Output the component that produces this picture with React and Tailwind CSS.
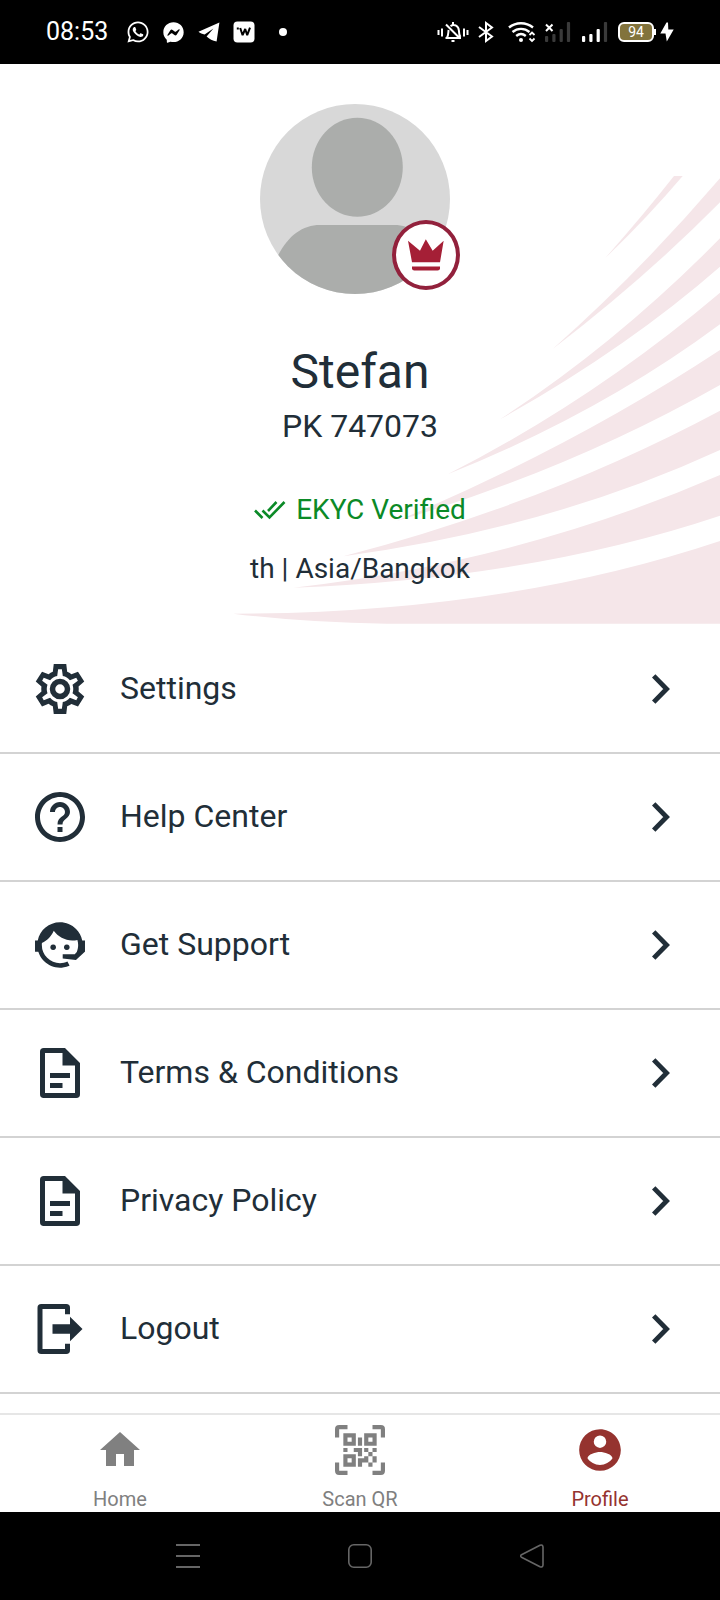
import React from "react";
import { FaWhatsapp, FaFacebookMessenger } from "react-icons/fa";
import { MdHelpOutline } from "react-icons/md";

const PATHS = {
  cog: "M12,7.9A4.1,4.1 0 0,1 16.1,12A4.1,4.1 0 0,1 12,16.1A4.1,4.1 0 0,1 7.9,12A4.1,4.1 0 0,1 12,7.9M12,10.1A1.9,1.9 0 0,0 10.1,12A1.9,1.9 0 0,0 12,13.9A1.9,1.9 0 0,0 13.9,12A1.9,1.9 0 0,0 12,10.1M9.5,22L9.13,18.93C8.5,18.68 7.96,18.34 7.44,17.94L4.8,18.95L2.3,15L4.57,12.97L4.5,12L4.57,11L2.3,9L4.8,5.05L7.44,6.05C7.96,5.66 8.5,5.32 9.13,5.07L9.5,2H14.5L14.87,5.07C15.5,5.32 16.04,5.66 16.56,6.05L19.2,5.05L21.7,9L19.43,11L19.5,12L19.43,13L21.7,15L19.2,18.95L16.56,17.95C16.04,18.34 15.5,18.68 14.87,18.93L14.5,22H9.5M11.25,4.1L10.88,6.8C9.68,7.05 8.8,7.6 8.05,8.5L5.5,7.5L4.85,8.7L7,10.3C6.6,11.4 6.6,12.6 7,13.7L4.85,15.3L5.5,16.5L8.05,15.5C8.8,16.4 9.68,16.95 10.88,17.2L11.25,19.9H12.75L13.12,17.2C14.32,16.95 15.2,16.4 15.95,15.5L18.5,16.5L19.15,15.3L17,13.7C17.4,12.6 17.4,11.4 17,10.3L19.15,8.7L18.5,7.5L15.95,8.5C15.2,7.6 14.32,7.05 13.12,6.8L12.75,4.1H11.25Z",
  agent:
    "M18.72,14.76C19.07,13.91 19.26,13 19.26,12C19.26,11.28 19.15,10.59 18.96,9.95C18.31,10.1 17.63,10.18 16.92,10.18C13.86,10.18 11.15,8.67 9.5,6.34C8.61,8.5 6.91,10.26 4.77,11.22C4.73,11.47 4.73,11.74 4.73,12A7.27,7.27 0 0,0 12,19.27C13.05,19.27 14.06,19.04 14.97,18.63C15.54,19.72 15.8,20.26 15.78,20.26C14.14,20.81 12.87,21.08 12,21.08C9.58,21.08 7.27,20.13 5.57,18.42C4.53,17.38 3.76,16.11 3.33,14.73H2V10.18H3.09C3.93,6.04 7.6,2.92 12,2.92C14.4,2.92 16.71,3.87 18.42,5.58C19.69,6.84 20.54,8.45 20.89,10.18H22V14.73H21.94L18.38,18L13.08,17.4V15.73H17.91L18.72,14.76M9.27,11.77A1.14,1.14 0 1,1 9.26,11.77M14.72,11.77A1.14,1.14 0 1,1 14.71,11.77Z",
  doc: "M5.5 2H14l6 6v12.5a1.5 1.5 0 0 1-1.5 1.5h-13A1.5 1.5 0 0 1 4 20.5v-17A1.5 1.5 0 0 1 5.5 2zM6 4v16h12V9h-5V4zM8 12h8v2H8zM8 16h5v2H8z",
  logout:
    "M4.5 2h10A1.5 1.5 0 0 1 16 3.5V6.1h-2V4H5v16h9v-2.1h2v2.6a1.5 1.5 0 0 1-1.5 1.5h-10A1.5 1.5 0 0 1 3 20.5v-17A1.5 1.5 0 0 1 4.5 2zM9 10.1h7V7.1L21 12l-5 4.9v-3H9z",
  home: "M10,20V14H14V20H19V12H22L12,3L2,12H5V20H10Z",
  account:
    "M12,19.2C9.5,19.2 7.29,17.92 6,16C6.03,14 10,12.9 12,12.9C14,12.9 17.97,14 18,16C16.71,17.92 14.5,19.2 12,19.2M12,5A3,3 0 0,1 15,8A3,3 0 0,1 12,11A3,3 0 0,1 9,8A3,3 0 0,1 12,5M12,2A10,10 0 0,0 2,12A10,10 0 0,0 12,22A10,10 0 0,0 22,12C22,6.47 17.5,2 12,2Z",
};

function Glyph({ name, className }) {
  return (
    <svg viewBox="0 0 24 24" fill="currentColor" fillRule="evenodd" className={className} aria-hidden="true">
      <path d={PATHS[name]} />
    </svg>
  );
}

function Signal({ levels, cross }) {
  return (
    <svg viewBox="0 0 26 22" className="h-[22px] w-[26px]" aria-hidden="true">
      {[0, 1, 2, 3].map((i) => {
        const h = [6, 8, 13, 20][i];
        return (
          <rect key={i} x={i * 7.3} y={21 - h} width="3.2" height={h} rx="1" fill={i < levels ? "#fff" : "#3a3a3a"} />
        );
      })}
      {cross && <path d="M1 3.5l6.5 6.5M7.5 3.5l-6.5 6.5" stroke="#fff" strokeWidth="2" />}
    </svg>
  );
}

function StatusBar() {
  return (
    <div className="flex h-16 items-center justify-between bg-black pr-[46px] pl-[46px] text-white">
      <div className="flex items-center">
        <span className="text-[25px] leading-8">08:53</span>
        <FaWhatsapp className="ml-[18px] size-6" />
        <FaFacebookMessenger className="ml-[13px] size-[21px]" />
        <svg viewBox="0 0 22 20" className="ml-[14px] h-5 w-[22px]" fill="currentColor" aria-hidden="true">
          <path d="M0.5 9.8 21.4 0.6 18.6 19.4C14.5 18.8 11.5 17.4 8.6 14.6L15.4 6.4 6.6 12.6C4.3 12 2.2 11.2 0.5 9.8z" />
        </svg>
        <svg viewBox="0 0 22 22" className="ml-[13px] size-[22px]" aria-hidden="true">
          <rect x="0.5" y="0.5" width="21" height="21" rx="4" fill="#fff" />
          <path d="M3.8 7.6h2M7.2 7l2.4 7.2 2.6-6.2 2 6.2L17 6.6" fill="none" stroke="#000" strokeWidth="2" strokeLinejoin="bevel" />
        </svg>
        <span className="ml-6 size-2 rounded-full bg-white" />
      </div>
      <div className="flex items-center">
        <svg viewBox="0 0 32 22" className="h-[22px] w-8" fill="none" stroke="#fff" strokeWidth="2" aria-hidden="true">
          <path d="M1.5 9v5M5 7.5v8M30.5 9v5M27 7.5v8" />
          <path d="M8.5 17h15.5M10 16.5c1.5-2 1.2-5 1.6-7.5M13.5 5.2c4-2.6 8-.2 8.4 4.3.1 2.5.1 4.5 1.5 6.5M9 3.5l14 14M16 1v3M14.5 20h3" />
        </svg>
        <svg viewBox="0 0 16 22" className="ml-[9px] h-[22px] w-4" fill="none" stroke="#fff" strokeWidth="2" aria-hidden="true">
          <path d="M1 6l13 9.5L8 20V2l6 4.5L1 16" />
        </svg>
        <svg viewBox="0 0 28 22" className="ml-[14px] h-[22px] w-7" fill="none" stroke="#fff" strokeWidth="2.4" aria-hidden="true">
          <path d="M1 6.5C8 .8 18 .8 25 6.5M4.5 11c5-4.2 12-4.2 17 0M8.2 15c3-2.5 6.6-2.5 9.6 0" />
          <circle cx="13" cy="19" r="2" fill="#fff" stroke="none" />
          <path d="M21.5 14l2.5-2.5 2.5 2.5M21.5 17.5l2.5 2.5 2.5-2.5" strokeWidth="1.8" />
        </svg>
        <div className="ml-[9px]"><Signal levels={0} cross /></div>
        <div className="ml-[11px]"><Signal levels={3} /></div>
        <div className="ml-[10px] flex h-5 w-9 items-center justify-center rounded-md border-2 border-white bg-[#82733c]">
          <span className="text-[14px] leading-4">94</span>
        </div>
        <span className="h-[6px] w-[2px] bg-white" />
        <svg viewBox="0 0 14 20" className="ml-1 h-5 w-[14px]" fill="#fff" aria-hidden="true">
          <path d="M6.5 0.5 0.3 11.5h5.2L6.8 19.5 13.7 7.5H8.3L8 0.5z" />
        </svg>
      </div>
    </div>
  );
}

function Rays() {
  return (
    <svg viewBox="0 0 1500 1392" className="absolute right-0 bottom-[2px] h-[464px] w-[500px]" fill="#f5e6e9" aria-hidden="true">
      <path d="M1155 295Q1270 165 1362 48H1388Q1280 175 1155 295z" />
      <path d="M998 567Q1260 335 1500 55V127Q1280 350 998 567z" />
      <path d="M840 778Q1190 550 1500 235V320Q1220 565 840 778z" />
      <path d="M683 943Q1120 720 1500 398V493Q1140 760 683 943z" />
      <path d="M530 1083Q1060 860 1500 570V675Q1050 930 530 1083z" />
      <path d="M370 1189Q980 1030 1500 752V870Q990 1105 370 1189z" />
      <path d="M220 1283Q900 1205 1500 945V1067Q940 1255 220 1283z" />
      <path d="M40 1361Q850 1360 1500 1143V1391H500Q250 1388 40 1361z" />
    </svg>
  );
}

function Avatar() {
  return (
    <div className="relative h-[190px] w-[200px]">
      <svg viewBox="0 0 190 190" className="size-[190px]" role="img" aria-label="Profile picture">
        <clipPath id="disc"><circle cx="95" cy="95" r="95" /></clipPath>
        <g clipPath="url(#disc)">
          <rect width="190" height="190" fill="#d8d8d8" />
          <ellipse cx="97.3" cy="63.3" rx="45.5" ry="49.5" fill="#abadab" />
          <path d="M10 190V172C20 138 38 121 60 121H134C156 121 174 138 184 172V190z" fill="#abadab" />
        </g>
      </svg>
      <div className="absolute right-0 bottom-1 flex h-[70px] w-[68px] items-center justify-center rounded-[50%] border-4 border-[#92213c] bg-white">
        <svg viewBox="504 449 108 95" className="h-8 w-9" fill="#a51f36" aria-hidden="true">
          <path d="M504 454L540 484 557.5 449 578 484 611 454 600 518H516z" />
          <path d="M516 531H600V536Q600 543 593 543H523Q516 543 516 536z" />
        </svg>
      </div>
    </div>
  );
}

const ITEMS = [
  { label: "Settings", icon: <Glyph name="cog" className="size-[60px]" /> },
  { label: "Help Center", icon: <MdHelpOutline className="size-[60px]" /> },
  { label: "Get Support", icon: <Glyph name="agent" className="size-[60px]" /> },
  { label: "Terms & Conditions", icon: <Glyph name="doc" className="size-[60px]" /> },
  { label: "Privacy Policy", icon: <Glyph name="doc" className="size-[60px]" /> },
  { label: "Logout", icon: <Glyph name="logout" className="size-[60px]" /> },
];

function QrIcon() {
  return (
    <svg viewBox="0 0 12 12" className="size-[50px]" fill="currentColor" fillRule="evenodd" aria-hidden="true">
      <path d="M0 3V1Q0 0 1 0H3V1H1V3zM9 0H11Q12 0 12 1V3H11V1H9zM0 9H1V11H3V12H1Q0 12 0 11zM11 9H12V11Q12 12 11 12H9V11H11z" />
      <path d="M2 2H5V5H2zM3 3V4H4V3zM7 2H10V5H7zM8 3V4H9V3zM2 7H5V10H2zM3 8V9H4V8z" />
      <path d="M5.5 3H6.5V5H5.5zM2 5.5H3V6.5H2zM4.5 5.5H6.5V7.5H5.5V6.5H4.5zM7 5.5H8V6.5H7zM9 5.5H10V6.5H9zM8 6.5H9V7.5H8zM7 7.5H8V9H6.5V10H5.5V8H7zM9 7.5H10V9H9zM8 9H9V10H8z" />
    </svg>
  );
}

const TABS = [
  { label: "Home", icon: <Glyph name="home" className="size-12" /> },
  { label: "Scan QR", icon: <QrIcon /> },
  { label: "Profile", icon: <Glyph name="account" className="size-[50px]" />, active: true },
];

export default function App() {
  return (
    <div className="flex min-h-screen flex-col bg-white font-['Roboto',sans-serif] text-[#212e38]">
      <StatusBar />
      <header className="relative flex flex-col items-center pt-10 pb-[41px]">
        <Rays />
        <Avatar />
        <h1 className="relative mt-[50px] text-5xl leading-[56px]">Stefan</h1>
        <p className="relative mt-[6px] text-[32px] leading-10">PK 747073</p>
        <p className="relative mt-12 flex items-center gap-[10px] text-[28px] leading-8 text-[#0b8a27]">
          <svg viewBox="0 0 32 20" className="h-5 w-8" fill="none" stroke="currentColor" strokeWidth="2.6" aria-hidden="true">
            <path d="M1 10.5l7.5 7.5M8.5 10.5l7 7L30.5 2M22.5 2L14 11" />
          </svg>
          EKYC Verified
        </p>
        <p className="relative mt-[27px] text-[28px] leading-8">th | Asia/Bangkok</p>
      </header>
      <main className="flex-1">
        <ul>
          {ITEMS.map((item) => (
            <li key={item.label}>
              <button type="button" className="flex h-32 w-full items-center border-b-2 border-[#d3d3d3] pr-[50px] pl-[30px] text-left">
                {item.icon}
                <span className="ml-[30px] flex-1 pb-[2px] text-[32px] leading-10">{item.label}</span>
                <svg viewBox="0 0 18 30" className="h-[30px] w-[18px]" fill="none" stroke="currentColor" strokeWidth="4.8" aria-hidden="true">
                  <path d="M1.7 1.9L14.6 15 1.7 28.1" />
                </svg>
              </button>
            </li>
          ))}
        </ul>
      </main>
      <nav className="grid grid-cols-3 border-t-2 border-[#e6e6e6] bg-white pt-[10px] pb-px">
        {TABS.map((tab) => (
          <a
            key={tab.label}
            href="#"
            aria-current={tab.active ? "page" : undefined}
            className={"flex flex-col items-center " + (tab.active ? "text-[#95332f]" : "text-[#808080]")}
          >
            <span className="flex h-[50px] items-center">{tab.icon}</span>
            <span className="mt-3 text-xl leading-6">{tab.label}</span>
          </a>
        ))}
      </nav>
      <div className="flex h-[88px] items-center justify-center gap-[148px] bg-black text-[#666]">
        <button type="button" aria-label="Recent apps">
          <svg viewBox="0 0 24 24" className="size-6" stroke="currentColor" strokeWidth="2" aria-hidden="true">
            <path d="M0 1h24M0 12h24M0 23h24" />
          </svg>
        </button>
        <button type="button" aria-label="Home screen">
          <svg viewBox="0 0 24 24" className="size-6" fill="none" stroke="currentColor" strokeWidth="1.6" aria-hidden="true">
            <rect x="0.8" y="0.8" width="22.4" height="22.4" rx="5" />
          </svg>
        </button>
        <button type="button" aria-label="Back">
          <svg viewBox="0 0 24 24" className="size-6" fill="none" stroke="currentColor" strokeWidth="1.6" strokeLinejoin="round" aria-hidden="true">
            <path d="M1.5 10.8L20 1.3Q22.8 .4 23 3V21Q22.8 23.6 20 22.7L1.5 13.2Q-.4 12 1.5 10.8z" />
          </svg>
        </button>
      </div>
    </div>
  );
}
